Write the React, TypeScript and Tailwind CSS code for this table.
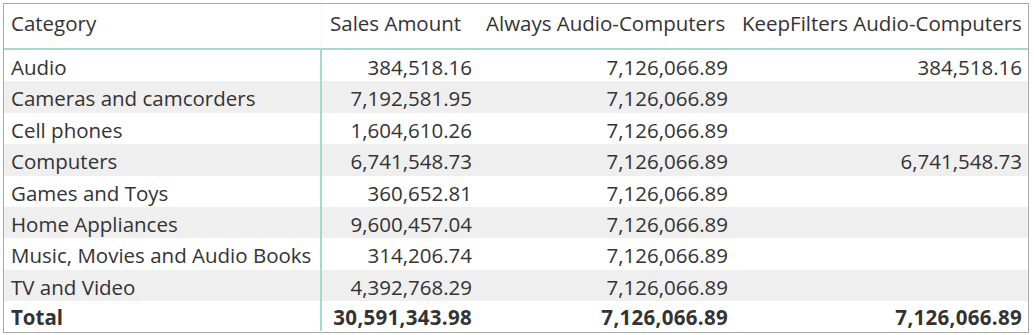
const rows = [
  { name: 'Audio', sales: '384,518.16', always: '7,126,066.89', keep: '384,518.16' },
  { name: 'Cameras and camcorders', sales: '7,192,581.95', always: '7,126,066.89', keep: '' },
  { name: 'Cell phones', sales: '1,604,610.26', always: '7,126,066.89', keep: '' },
  { name: 'Computers', sales: '6,741,548.73', always: '7,126,066.89', keep: '6,741,548.73' },
  { name: 'Games and Toys', sales: '360,652.81', always: '7,126,066.89', keep: '' },
  { name: 'Home Appliances', sales: '9,600,457.04', always: '7,126,066.89', keep: '' },
  { name: 'Music, Movies and Audio Books', sales: '314,206.74', always: '7,126,066.89', keep: '' },
  { name: 'TV and Video', sales: '4,392,768.29', always: '7,126,066.89', keep: '' },
];

export default function App() {
  return (
    <div className="w-[1034px] h-[335px] bg-white pt-[3px] pl-[3px]" style={{ fontFamily: '"Open Sans", "Noto Sans", sans-serif' }}>
      <div className="w-[1026px] h-[330px] border border-[#a8a8a8] text-[20.5px] text-[#333333] leading-none">
        {/* Header */}
        <div className="flex h-[46px] border-b-2 border-[#a6d9ce]">
          <div className="w-[318px] pl-[7px] pt-[9px] border-r border-[#eef7f5]">Category</div>
          <div className="w-[156px] pl-[8px] pt-[9px]">Sales Amount</div>
          <div className="w-[256px] pl-[8px] pt-[9px]">Always Audio-Computers</div>
          <div className="flex-1 pl-[8px] pt-[9px]">KeepFilters Audio-Computers</div>
        </div>

        {/* Body */}
        {rows.map((r, i) => (
          <div key={r.name} className={`flex h-[31.4px] ${i % 2 === 1 ? 'bg-[#efefef]' : 'bg-white'}`}>
            <div className="w-[318px] flex items-center pl-[7px] pt-[3px] border-r-2 border-[#a6d9ce]">{r.name}</div>
            <div className="w-[156px] flex items-center justify-end pr-[6px] pt-[3px]">{r.sales}</div>
            <div className="w-[256px] flex items-center justify-end pr-[6px] pt-[3px]">{r.always}</div>
            <div className="flex-1 flex items-center justify-end pr-[6px] pt-[3px]">{r.keep}</div>
          </div>
        ))}

        {/* Total */}
        <div className="flex h-[30px] font-bold">
          <div className="w-[318px] flex items-center pl-[7px] pt-[2px] border-r-2 border-[#a6d9ce]">Total</div>
          <div className="w-[156px] flex items-center justify-end pr-[6px] pt-[2px] tracking-[0.3px]">30,591,343.98</div>
          <div className="w-[256px] flex items-center justify-end pr-[6px] pt-[2px] tracking-[0.3px]">7,126,066.89</div>
          <div className="flex-1 flex items-center justify-end pr-[6px] pt-[2px] tracking-[0.3px]">7,126,066.89</div>
        </div>
      </div>
    </div>
  );
}
